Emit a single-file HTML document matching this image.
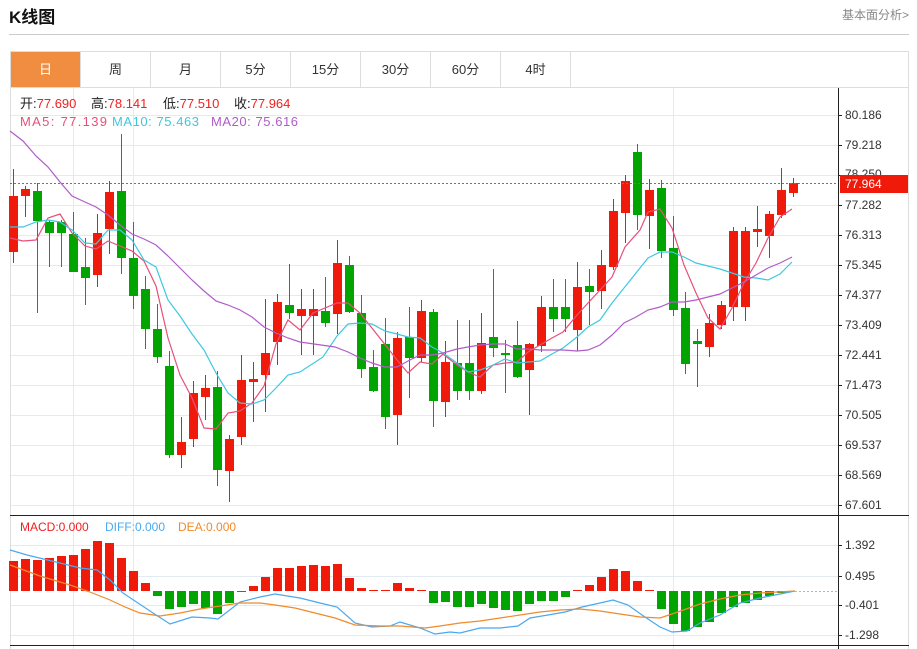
<!DOCTYPE html>
<html><head><meta charset="utf-8">
<style>
*{margin:0;padding:0;box-sizing:border-box}
body{width:917px;height:649px;background:#fff;font-family:"Liberation Sans","Noto Sans CJK SC",sans-serif;position:relative;overflow:hidden}
.title{position:absolute;left:9px;top:3px;font-size:17px;font-weight:bold;color:#111}
.more{position:absolute;right:8px;top:6px;font-size:12px;color:#888}
.hr{position:absolute;left:9px;top:34px;width:900px;height:1px;background:#ccc}
.tabs{position:absolute;left:10px;top:51px;width:899px;height:37px;border:1px solid #ddd;display:flex}
.tab{width:70px;height:35px;border-right:1px solid #ddd;text-align:center;line-height:35px;font-size:13px;color:#333}
.tab.on{background:#f18d41;color:#fff}
svg{position:absolute;left:0;top:0}
</style></head><body>
<div class="title">K线图</div>
<div class="more">基本面分析&gt;</div>
<div class="hr"></div>
<div class="tabs"><div class="tab on">日</div><div class="tab">周</div><div class="tab">月</div><div class="tab">5分</div><div class="tab">15分</div><div class="tab">30分</div><div class="tab">60分</div><div class="tab">4时</div></div>
<svg id="s" width="917" height="649" font-family="Liberation Sans, Noto Sans CJK SC, sans-serif">
<g id="grid" stroke="#e2ebf2" stroke-width="1"></g>
<line x1="10.5" y1="88" x2="10.5" y2="649" stroke="#ddd"/>
<line x1="908.5" y1="88" x2="908.5" y2="649" stroke="#ddd"/>
<line x1="73.5" y1="88" x2="73.5" y2="649" stroke="#e2ebf2"/>
<line x1="133.5" y1="88" x2="133.5" y2="649" stroke="#e2ebf2"/>
<line x1="673.5" y1="88" x2="673.5" y2="649" stroke="#e2ebf2"/>
<g id="c"></g>
<g id="m"></g>
<line x1="10" y1="183.5" x2="838" y2="183.5" stroke="#f04040" stroke-dasharray="2,2"/>
<line x1="795" y1="591.5" x2="838" y2="591.5" stroke="#8cc4e8" stroke-dasharray="2,2"/>
<line x1="838.5" y1="88" x2="838.5" y2="649" stroke="#222"/>
<line x1="10" y1="515.5" x2="909" y2="515.5" stroke="#222"/>
<line x1="10" y1="645.5" x2="909" y2="645.5" stroke="#222"/>
<g id="ticks" stroke="#222"></g>
<g font-size="12" fill="#333">
<text x="845" y="119">80.186</text><text x="845" y="149">79.218</text><text x="845" y="178">78.250</text>
<text x="845" y="209">77.282</text><text x="845" y="239">76.313</text><text x="845" y="269">75.345</text>
<text x="845" y="299">74.377</text><text x="845" y="329">73.409</text><text x="845" y="359">72.441</text>
<text x="845" y="389">71.473</text><text x="845" y="419">70.505</text><text x="845" y="449">69.537</text>
<text x="845" y="479">68.569</text><text x="845" y="509">67.601</text>
<text x="845" y="549">1.392</text><text x="845" y="580">0.495</text><text x="845" y="609">-0.401</text><text x="845" y="639">-1.298</text>
</g>
<rect x="840" y="175" width="68" height="18" fill="#f01a0a"/>
<text x="845" y="188" font-size="12" fill="#fff">77.964</text>
<g font-size="13">
<text x="20" y="108" fill="#222">开:<tspan fill="#f02020">77.690</tspan></text>
<text x="91" y="108" fill="#222">高:<tspan fill="#f02020">78.141</tspan></text>
<text x="163" y="108" fill="#222">低:<tspan fill="#f02020">77.510</tspan></text>
<text x="234" y="108" fill="#222">收:<tspan fill="#f02020">77.964</tspan></text>
<text x="20" y="126" fill="#e8507a" textLength="87">MA5: 77.139</text>
<text x="112" y="126" fill="#3ec8e0" textLength="87">MA10: 75.463</text>
<text x="211" y="126" fill="#b05cc8" textLength="87">MA20: 75.616</text>
<text x="20" y="531" font-size="12" fill="#f02020">MACD:0.000</text>
<text x="105" y="531" font-size="12" fill="#4aa8f0">DIFF:0.000</text>
<text x="178" y="531" font-size="12" fill="#f08a2a">DEA:0.000</text>
</g>
</svg>
<script>
var NS="http://www.w3.org/2000/svg";
function el(p,t,a){var e=document.createElementNS(NS,t);for(var k in a)e.setAttribute(k,a[k]);document.getElementById(p).appendChild(e);return e;}
[115,145,175,205,235,265,295,325,355,385,415,445,475,505,545,576,605,635].forEach(function(y){
 el("grid","line",{x1:10,y1:y+.5,x2:838,y2:y+.5});
 el("ticks","line",{x1:838,y1:y+.5,x2:842,y2:y+.5});
});
var C=[[196,252,169,263,'r'],[189,196,186,217,'r'],[191,221,183,313,'g'],[222,233,220,267,'g'],[222,233,220,267,'g'],[234,272,212,272,'g'],[267,278,238,305,'g'],[233,275,214,287,'r'],[192,229,181,254,'r'],[191,258,134,274,'g'],
[258,296,222,309,'g'],[289,329,276,349,'g'],[329,357,304,363,'g'],[366,455,351,458,'g'],[442,455,417,468,'r'],[393,439,381,447,'r'],[388,397,375,420,'r'],[387,470,371,486,'g'],[439,471,435,502,'r'],[380,437,355,445,'r'],
[379,382,362,422,'r'],[353,375,299,412,'r'],[302,342,294,365,'r'],[305,313,264,319,'g'],[309,316,289,355,'r'],[309,316,289,355,'r'],[311,323,277,327,'g'],[263,314,240,334,'r'],[265,312,256,313,'g'],[313,369,295,378,'g'],
[367,391,350,392,'g'],[344,417,318,429,'g'],[338,415,332,445,'r'],[337,358,307,398,'g'],[311,358,300,362,'r'],[312,401,309,427,'g'],[362,402,341,417,'r'],[363,391,320,400,'g'],[363,391,320,400,'g'],[343,391,313,394,'r'],
[337,348,269,357,'g'],[353,355,340,393,'g'],[345,377,321,378,'g'],[344,370,343,415,'r'],[307,346,296,352,'r'],[307,319,279,332,'g'],[307,319,279,332,'g'],[287,330,262,351,'r'],[286,292,269,325,'g'],[265,291,250,309,'r'],
[211,267,199,270,'r'],[181,213,175,243,'r'],[152,215,144,230,'g'],[190,216,179,249,'r'],[188,251,180,258,'g'],[248,310,216,316,'g'],[308,364,292,374,'g'],[341,344,329,387,'g'],[323,347,314,357,'r'],[305,325,301,329,'r'],
[231,307,227,321,'r'],[231,307,227,321,'r'],[229,232,206,247,'r'],[214,236,211,258,'r'],[190,215,168,218,'r'],[183,193,178,197,'r']];
C.forEach(function(c,i){var x=13+12*i,col=c[4]=='r'?'#f01a0a':'#02a402';
 el("c","line",{x1:x+.5,y1:c[2],x2:x+.5,y2:c[3],stroke:col});
 el("c","rect",{x:x-4,y:c[0],width:9,height:Math.max(2,c[1]-c[0]),fill:col});});
var H=[561,559,560,558,556,555,549,541,543,558,571,583,596,609,607,604,608,614,603,592,586,577,568,568,566,565,566,564,578,588,590,590,583,588,590,603,602,607,607,604,608,610,611,604,601,601,597,590,585,577,569,571,581,590,609,624,631,627,622,613,607,603,600,596,593,591];
H.forEach(function(y,i){var x=13+12*i-4;
 if(y<591)el("c","rect",{x:x,y:y,width:9,height:591-y,fill:'#f01a0a'});
 else if(y>591)el("c","rect",{x:x,y:591,width:9,height:y-591,fill:'#02a402'});});
function pl(pts,col){el("m","polyline",{points:pts,fill:"none",stroke:col,"stroke-width":1.2});}
pl("10,238 23,241 36,240 48,218 60,214 72,233 85,246 96,249 108,241 120,246 132,251 144,261 156,286 168,338 180,375 192,398 204,428 216,429 228,413 240,411 252,403 264,386 276,344 288,320 300,330 313,313 337,303 348,303 360,313 383,342 397,360 408,373 420,362 432,364 443,354 457,365 468,372 480,377 493,365 505,363 517,362 528,352 540,345 552,338 563,332 577,315 588,303 600,290 612,277 625,247 640,230 648,212 660,209 672,228 684,265 696,293 708,318 720,329 732,308 744,283 756,263 768,238 780,217 792,209","#e8507a");
pl("10,227 23,227 36,222 48,220 60,222 72,230 85,243 96,244 108,230 120,230 132,240 144,260 156,267 168,300 180,316 192,334 204,350 216,373 228,393 240,403 252,404 264,400 276,388 288,375 300,372 323,357 337,336 348,324 360,323 372,324 385,331 397,334 408,337 420,338 432,347 443,353 457,363 468,372 480,370 493,365 505,359 517,363 528,362 540,361 552,354 563,348 577,337 588,327 600,320 612,303 624,288 636,273 648,258 660,252 672,252 684,257 696,263 708,266 720,269 732,273 744,277 756,278 768,280 780,274 792,262","#3ec8e0");
pl("10,131 23,141 36,156 48,167 60,182 72,196 85,202 96,207 108,215 120,225 132,234 144,239 156,245 168,256 180,268 192,280 204,291 216,301 228,305 240,310 252,317 264,327 276,333 288,338 300,342 335,347 348,352 360,358 372,363 385,367 397,367 408,361 420,355 432,355 443,353 457,349 468,347 480,345 493,344 505,344 517,349 528,349 540,350 552,350 563,350 577,351 588,350 600,345 612,335 624,323 636,317 648,310 660,307 672,302 684,302 696,300 708,297 720,294 732,288 744,282 756,275 768,268 780,263 792,257","#b05cc8");
pl("10,550 27,555 60,563 80,568 97,570 110,580 123,593 153,613 170,624 192,617 210,618 218,619 240,602 260,597 275,594 300,598 320,603 337,607 355,623 372,627 390,626 400,622 420,628 435,634 450,632 460,633 480,628 500,628 518,626 530,618 548,615 565,612 582,607 600,603 613,600 628,605 642,615 660,627 672,632 687,631 700,623 720,615 740,603 760,598 780,594 795,591","#4aa8f0");
pl("10,565 40,576 70,585 90,592 110,600 125,607 140,613 160,616 180,613 200,609 220,606 240,603 260,603 275,605 295,608 315,613 335,618 355,625 380,626 400,626 425,628 440,626 460,623 480,621 500,618 520,615 540,612 560,610 580,609 600,611 620,614 640,617 660,618 675,613 700,604 720,599 740,595 760,593 795,591","#f08a2a");
</script>
</body></html>
